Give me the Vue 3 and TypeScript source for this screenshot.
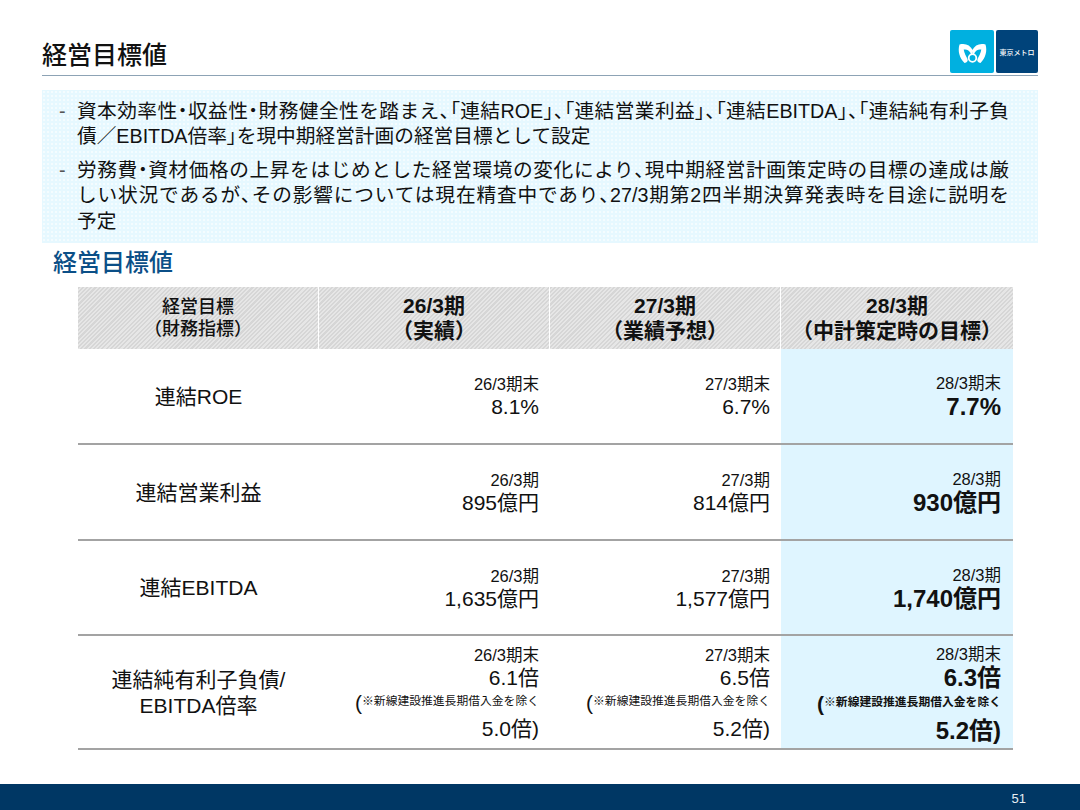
<!-- 経営目標値スライド -->
<template>
  <div class="slide">
    <header class="top">
      <h1>経営目標値</h1>
      <div class="logo">
        <div class="mark">
          <svg viewBox="0 0 44 44" width="44" height="44">
            <path class="m" d="M23 20.5C20 15 15.5 13 9.5 14.5 7.5 21 9.5 28 14.5 33c2.5-.5 3.8-2 3-4-1.5-3-3.300-6-3.800-9.500 3-.5 5 .5 6.500 3l1.800 3z" />
            <path class="m" transform="matrix(-1 0 0 1 45 0)" d="M23 20.5C20 15 15.5 13 9.5 14.5 7.5 21 9.5 28 14.5 33c2.5-.5 3.8-2 3-4-1.500-3-3.300-6-3.800-9.500 3-.5 5 .5 6.500 3l1.800 3z" />
            <circle class="ring" cx="22.5" cy="28" r="3.8" />
          </svg>
        </div>
        <div class="name">東京メトロ</div>
      </div>
    </header>

    <section class="notes">
      <div class="note">
        <span class="dash">-</span>
        <p>
          <span class="line">資本効率性<span class="tight">・</span>収益性<span class="tight">・</span>財務健全性を踏まえ<span class="tight">、「</span>連結ROE<span class="tight">」、「</span>連結営業利益<span class="tight">」、「</span>連結EBITDA<span class="tight">」、「</span>連結純有利子負</span>
          <span class="line">債／EBITDA倍率<span class="tight">」</span>を現中期経営計画の経営目標として設定</span>
        </p>
      </div>
      <div class="note">
        <span class="dash">-</span>
        <p>
          <span class="line">労務費<span class="tight">・</span>資材価格の上昇をはじめとした経営環境の変化により<span class="tight">、</span>現中期経営計画策定時の目標の達成は厳</span>
          <span class="line">しい状況であるが<span class="tight">、</span>その影響については現在精査中であり<span class="tight">、</span>27/3期第2四半期決算発表時を目途に説明を</span>
          <span class="line">予定</span>
        </p>
      </div>
    </section>

    <h2>経営目標値</h2>

    <div class="table">
      <div class="thead">
        <div class="th first">経営目標<br />（財務指標）</div>
        <div v-for="h in heads" :key="h[0]" class="th">{{ h[0] }}<br />{{ h[1] }}</div>
      </div>
      <div v-for="r in rows" :key="r.name" class="row" :class="r.cls">
        <div class="label"><template v-for="(l, i) in r.name.split('|')" :key="l"><br v-if="i" />{{ l }}</template></div>
        <div v-for="(c, i) in r.cells" :key="c.period" class="cell" :class="{ goal: i === 2 }">
          <div class="period">{{ c.period }}</div>
          <div class="value">{{ c.value }}</div>
          <template v-if="c.sub">
            <div class="paren"><span class="open">(</span><span class="small">※新線建設推進長期借入金を除く</span></div>
            <div class="value second">{{ c.sub }})</div>
          </template>
        </div>
      </div>
    </div>

    <footer class="foot"><span>51</span></footer>
  </div>
</template>

<script setup lang="ts">
interface Cell { period: string; value: string; sub?: string }
interface Row { name: string; cls?: string; cells: Cell[] }

const heads = [
  ['26/3期', '（実績）'],
  ['27/3期', '（業績予想）'],
  ['28/3期', '（中計策定時の目標）'],
];

const rows: Row[] = [
  {
    name: '連結ROE',
    cells: [
      { period: '26/3期末', value: '8.1%' },
      { period: '27/3期末', value: '6.7%' },
      { period: '28/3期末', value: '7.7%' },
    ],
  },
  {
    name: '連結営業利益',
    cls: 'wide',
    cells: [
      { period: '26/3期', value: '895億円' },
      { period: '27/3期', value: '814億円' },
      { period: '28/3期', value: '930億円' },
    ],
  },
  {
    name: '連結EBITDA',
    cls: 'narrow',
    cells: [
      { period: '26/3期', value: '1,635億円' },
      { period: '27/3期', value: '1,577億円' },
      { period: '28/3期', value: '1,740億円' },
    ],
  },
  {
    name: '連結純有利子負債/|EBITDA倍率',
    cls: 'tall',
    cells: [
      { period: '26/3期末', value: '6.1倍', sub: '5.0倍' },
      { period: '27/3期末', value: '6.5倍', sub: '5.2倍' },
      { period: '28/3期末', value: '6.3倍', sub: '5.2倍' },
    ],
  },
];
</script>

<style>
html, body { margin: 0; background: #fff; }
</style>

<style scoped>
.slide {
  width: 1080px;
  height: 810px;
  display: flex;
  flex-direction: column;
  overflow: hidden;
  background: #fff;
  color: #111;
  font-family: "Liberation Sans", "Noto Sans CJK JP", sans-serif;
}
.top {
  height: 45px;
  margin: 30px 42px 0;
  display: flex;
  align-items: flex-start;
  justify-content: space-between;
  border-bottom: 1px solid #8da3b5;
}
h1 { margin: 10px 0 0; font-size: 25px; line-height: 30px; font-weight: 500; }
.logo { display: flex; gap: 2px; height: 43px; }
.mark { width: 44px; background: #00b0e0; border-radius: 2px; display: flex; align-items: center; justify-content: center; }
.m { fill: #fff; }
.ring { fill: none; stroke: #fff; stroke-width: 1.8; }
.name {
  width: 42px;
  background: #00437a;
  border-radius: 2px;
  color: #fff;
  font-size: 7px;
  font-weight: 500;
  display: flex;
  align-items: center;
  justify-content: center;
}
.notes {
  height: 153px;
  box-sizing: border-box;
  margin: 14px 42px 0;
  padding: 9px 0 0 17px;
  background-color: #e6f8ff;
  background-image: radial-gradient(#f4fcff 35%, transparent 40%);
  background-size: 4px 4px;
}
.note { display: flex; font-size: 19.7px; line-height: 25.4px; margin-bottom: 8px; white-space: nowrap; }
.note p { margin: 0; width: 932px; }
.line { display: block; text-align: justify; text-align-last: justify; }
.line:last-child { text-align-last: left; }
.tight { font-feature-settings: "palt"; }
.dash { flex: none; width: 18px; color: #555; }
h2 {
  margin: 5px 0 0 53px;
  font-size: 24px;
  line-height: 30px;
  font-weight: 500;
  color: #0b4f87;
}
.table { margin: 9px 0 0 78px; width: 935px; }
.thead { display: grid; grid-template-columns: 241px 231px 231px 232px; height: 62px; }
.th {
  margin-right: 1px;
  text-align: center;
  font-size: 21px;
  line-height: 25px;
  font-weight: 700;
  padding-top: 6px;
  box-sizing: border-box;
  white-space: nowrap;
  background: repeating-linear-gradient(135deg, #d6d6d6 0 1.5px, #e6e6e6 1.5px 3px);
}
.th:last-child { margin-right: 0; }
.th.first { font-size: 18px; line-height: 22px; font-weight: 500; padding-top: 9px; }
.row {
  display: grid;
  grid-template-columns: 241px 231px 231px 232px;
  height: 95.5px;
  box-sizing: border-box;
  border-bottom: 2px solid #a3a3a3;
}
.row.wide { height: 96px; }
.row.narrow { height: 95px; }
.row.tall { height: 114px; }
.label {
  text-align: center;
  font-size: 21px;
  line-height: 25.5px;
  align-self: center;
  padding-top: 2px;
}
.cell { padding: 26px 11px 0 0; text-align: right; }
.cell.goal { background: #dff5ff; padding-right: 12px; font-weight: 700; }
.tall .cell { padding-top: 10px; }
.period { font-size: 16.5px; line-height: 19px; font-weight: 400; }
.value { font-size: 21px; line-height: 26px; }
.goal .value { font-size: 24px; line-height: 28px; }
.goal .period { margin-top: -2px; line-height: 20px; }
.paren { display: flex; justify-content: flex-end; align-items: center; height: 24px; white-space: nowrap; }
.open { font-size: 21px; line-height: 24px; }
.small { font-size: 11.8px; line-height: 24px; margin-bottom: 3px; }
.second { margin-top: 1px; }
.foot {
  margin-top: auto;
  height: 26px;
  background: #003764;
  color: #e8eef4;
  font-size: 13px;
  line-height: 29px;
  text-align: right;
  padding-right: 54px;
}
</style>
